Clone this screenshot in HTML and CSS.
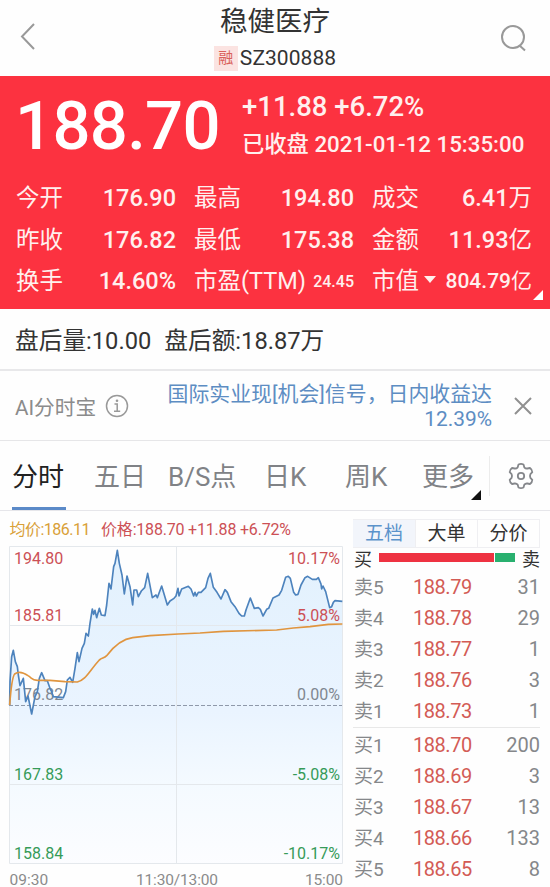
FILE: index.html
```
<!DOCTYPE html>
<html lang="zh-CN">
<head>
<meta charset="utf-8">
<title>稳健医疗 SZ300888</title>
<link rel="stylesheet" href="styles.css">
</head>
<body>
<header class="top">
  <svg class="back" width="16" height="28" viewBox="0 0 16 28"><path d="M14 2 2 14.500 14 27"/></svg>
  <div class="title">
    <h1>稳健医疗</h1>
    <div class="code"><span class="badge">融</span><span>SZ300888</span></div>
  </div>
  <svg class="search" width="28" height="30" viewBox="0 0 28 30"><circle cx="14" cy="14" r="11"/><path d="M20.500 22.500 26 27.500"/></svg>
</header>

<section class="quote">
  <div class="summary">
    <div class="price">188.70</div>
    <div class="meta">
      <div class="change">+11.88 +6.72%</div>
      <div class="time">已收盘 2021-01-12 15:35:00</div>
    </div>
  </div>
  <div class="stats">
    <div class="stat"><span>今开</span><b>176.90</b></div>
    <div class="stat"><span>最高</span><b>194.80</b></div>
    <div class="stat"><span>成交</span><b>6.41<i>万</i></b></div>
    <div class="stat"><span>昨收</span><b>176.82</b></div>
    <div class="stat"><span>最低</span><b>175.38</b></div>
    <div class="stat"><span>金额</span><b>11.93<i>亿</i></b></div>
    <div class="stat"><span>换手</span><b>14.60%</b></div>
    <div class="stat"><span>市盈(TTM)</span><b class="small">24.45</b></div>
    <div class="stat"><span>市值<i class="caret"></i></span><b class="cap">804.79<i>亿</i></b></div>
  </div>
  <i class="corner"></i>
</section>

<section class="after"><span>盘后量:10.00</span><span>盘后额:18.87万</span></section>

<section class="ai">
  <span class="ai-name">AI分时宝</span>
  <svg class="info" width="24" height="24" viewBox="0 0 24 24"><circle cx="12" cy="12" r="10.5"/><path d="M9.5 10h2.7v7M9 17.2h6.2"/><circle class="dot" cx="12" cy="6.7" r="1.3"/></svg>
  <p>国际实业现[机会]信号，日内收益达<br>12.39%</p>
  <svg class="close" width="20" height="20" viewBox="0 0 20 20"><path d="M2 2 18 18M18 2 2 18"/></svg>
</section>

<nav class="tabs">
  <span class="tab active">分时</span>
  <span class="tab">五日</span>
  <span class="tab bs">B/S点</span>
  <span class="tab dk">日K</span>
  <span class="tab wk">周K</span>
  <span class="tab more">更多</span>
  <span class="gear"><svg width="28" height="28" viewBox="0 0 28 28"><path d="M11.500 2.500Q14 1.300 16.500 2.500L17.300 5.300Q18.500 6.700 20.300 6.500L23 6Q25.200 7.500 25.300 10.200L23.400 12.200Q22.600 14 23.400 15.800L25.300 17.800Q25.200 20.500 23 22L20.300 21.500Q18.500 21.300 17.300 22.700L16.500 25.500Q14 26.700 11.500 25.500L10.700 22.700Q9.500 21.300 7.700 21.500L5 22Q2.800 20.500 2.700 17.800L4.600 15.800Q5.400 14 4.600 12.200L2.700 10.200Q2.800 7.500 5 6L7.700 6.500Q9.500 6.700 10.700 5.300Z"/><circle cx="14" cy="14" r="3.200"/></svg></span>
</nav>

<main class="board">
  <svg class="chart" width="345" height="376" viewBox="0 0 345 376">
    <defs>
      <linearGradient id="fill" gradientUnits="userSpaceOnUse" x1="0" y1="100" x2="0" y2="1080">
        <stop offset="0" stop-color="#e2f1fd"/><stop offset=".5" stop-color="#eaf4ff"/><stop offset=".72" stop-color="#f4faff"/><stop offset="1" stop-color="#fdfdff"/>
      </linearGradient>
    </defs>
    <g transform="translate(0 4) scale(.33333)">
      <path class="area" d="M29 1045V570L30 500 35 425 40 406 46 440 52 455 55 480 60 512 70 490 77 560 84 543 95 597 105 545 112 530 118 490 125 473 135 497 142 497 150 520 155 530 160 545 190 548 197 530 202 495 210 487 218 502 225 460 232 413 237 440 246 400 253 385 258 355 265 363 270 325 277 282 281 298 285 286 290 308 298 280 304 300 315 302 320 270 327 205 333 222 341 155 345 145 352 106 358 145 366 180 373 237 381 183 390 215 398 270 402 225 410 225 415 245 424 228 434 218 443 175 457 248 468 240 472 248 485 213 502 270 510 258 522 250 528 243 534 220 537 243 545 222 565 214 573 222 581 243 585 232 589 243 595 232 603 232 617 218 624 190 631 175 640 217 651 232 663 252 675 224 682 232 693 260 705 275 717 295 725 303 733 303 738 285 751 249 763 280 775 278 781 283 789 303 800 283 806 280 819 249 837 240 845 226 857 187 865 184 871 190 881 232 887 240 894 238 903 210 915 188 923 184 937 193 949 193 955 188 963 207 965 222 969 213 977 230 989 278 995 275 1000 262 1005 257 1027 259V1045Z"/>
    </g>
    <path class="grid" d="M9.500 35.500H342.500M9.500 114.500H342.500M9.500 273.500H342.500M9.500 352.500H342.500M9.500 35.500V352.500M176.500 35.500V352.500M342.500 35.500V352.500"/>
    <path class="zero" d="M9 194.500H342"/>
    <g class="red"><text x="14" y="53">194.80</text><text x="14" y="110">185.81</text></g>
    <text class="mid" x="14" y="189">176.82</text>
    <g transform="translate(0 4) scale(.33333)">
      <path class="line" d="M29 570 30 500 35 425 40 406 46 440 52 455 55 480 60 512 70 490 77 560 84 543 95 597 105 545 112 530 118 490 125 473 135 497 142 497 150 520 155 530 160 545 190 548 197 530 202 495 210 487 218 502 225 460 232 413 237 440 246 400 253 385 258 355 265 363 270 325 277 282 281 298 285 286 290 308 298 280 304 300 315 302 320 270 327 205 333 222 341 155 345 145 352 106 358 145 366 180 373 237 381 183 390 215 398 270 402 225 410 225 415 245 424 228 434 218 443 175 457 248 468 240 472 248 485 213 502 270 510 258 522 250 528 243 534 220 537 243 545 222 565 214 573 222 581 243 585 232 589 243 595 232 603 232 617 218 624 190 631 175 640 217 651 232 663 252 675 224 682 232 693 260 705 275 717 295 725 303 733 303 738 285 751 249 763 280 775 278 781 283 789 303 800 283 806 280 819 249 837 240 845 226 857 187 865 184 871 190 881 232 887 240 894 238 903 210 915 188 923 184 937 193 949 193 955 188 963 207 965 222 969 213 977 230 989 278 995 275 1000 262 1005 257 1027 259"/>
      <path class="avg" d="M29 570C32 530 36 485 44 477 56 468 70 472 84 482 98 491 96 495 112 496L150 496 195 500 232 501C258 494 266 470 298 435 306 428 312 430 320 422 340 396 365 372 398 368L450 362 535 357 600 354 670 349 830 345 880 339 930 335 985 328 1027 327"/>
    </g>
    <g class="red end"><text x="340" y="53">10.17%</text><text x="340" y="110">5.08%</text></g>
    <text class="mid end" x="340" y="189">0.00%</text>
    <g class="green"><text x="14" y="269">167.83</text><text x="14" y="348">158.84</text><g class="end"><text x="340" y="269">-5.08%</text><text x="340" y="348">-10.17%</text></g></g>
    <g class="hours"><text x="9.500" y="374">09:30</text><text x="136" y="374" textLength="82">11:30/13:00</text><text x="305" y="374" textLength="38">15:00</text></g>
    <g class="legend"><text class="gold" x="9.500" y="24" textLength="81">均价:186.11</text><text x="101" y="24" textLength="190">价格:188.70 +11.88 +6.72%</text></g>
  </svg>

  <aside class="depth">
    <div class="depth-tabs"><span class="on">五档</span><span>大单</span><span>分价</span></div>
    <div class="ratio"><span>买</span><i class="buy"></i><i class="sell"></i><span>卖</span></div>
    <div class="rows">
      <div class="row"><span>卖5</span><b>188.79</b><em>31</em></div>
      <div class="row"><span>卖4</span><b>188.78</b><em>29</em></div>
      <div class="row"><span>卖3</span><b>188.77</b><em>1</em></div>
      <div class="row"><span>卖2</span><b>188.76</b><em>3</em></div>
      <div class="row"><span>卖1</span><b>188.73</b><em>1</em></div>
    </div>
    <div class="rows bids">
      <div class="row"><span>买1</span><b>188.70</b><em>200</em></div>
      <div class="row"><span>买2</span><b>188.69</b><em>3</em></div>
      <div class="row"><span>买3</span><b>188.67</b><em>13</em></div>
      <div class="row"><span>买4</span><b>188.66</b><em>133</em></div>
      <div class="row"><span>买5</span><b>188.65</b><em>8</em></div>
    </div>
  </aside>
</main>
</body>
</html>
```
FILE: styles.css
```
* { box-sizing: border-box; }
body {
  margin: 0;
  width: 550px;
  height: 887px;
  overflow: hidden;
  background: #fefefe;
  color: #333;
  font-family: Roboto, "Noto Sans CJK SC", sans-serif;
}
svg { fill: none; flex: none; }
b, em, i, h1 { font-weight: inherit; font-style: normal; }

.top {
  height: 76px;
  display: flex;
  justify-content: space-between;
  padding: 0 23px 0 20px;
}
.back { margin-top: 22px; stroke: #999; stroke-width: 2; }
.search { margin-top: 23px; stroke: #999; stroke-width: 2; }
.title {
  display: flex;
  flex-direction: column;
  align-items: center;
  margin-left: 15px;
}
.title h1 { margin: 5px 0 0; font-size: 27.500px; line-height: 34px; }
.code {
  display: flex;
  align-items: center;
  gap: 2px;
  height: 26px;
  margin-top: 6px;
  font-size: 21px;
  letter-spacing: .05px;
}
.badge {
  width: 24px;
  height: 25px;
  background: #fbe3e1;
  color: #d9605a;
  font-size: 15px;
  line-height: 25px;
  text-align: center;
}

.quote {
  position: relative;
  height: 233px;
  background: #fc3240;
  color: #fff0ee;
}
.summary { display: flex; height: 102px; padding-left: 15px; }
.price {
  width: 227px;
  padding-top: 10px;
  color: #fff;
  font-size: 67px;
  font-weight: 500;
  line-height: 80px;
  letter-spacing: -.7px;
}
.meta { padding-top: 15px; font-weight: 500; white-space: nowrap; }
.change { font-size: 27.500px; line-height: 32px; }
.time { margin-top: 7px; font-size: 22.300px; line-height: 28px; }
.stats {
  display: grid;
  grid-template-columns: repeat(3, 160px);
  grid-auto-rows: 41.500px;
  column-gap: 18px;
  padding-left: 16px;
}
.stat {
  display: flex;
  align-items: center;
  justify-content: space-between;
  font-size: 23.500px;
  line-height: 41px;
  white-space: nowrap;
}
.stat b { font-weight: 500; }
.stat b i { font-weight: 400; }
.stat .small { font-size: 16px; }
.stat .cap { font-size: 21px; }
.caret {
  display: inline-block;
  margin-left: 5px;
  vertical-align: 6px;
  border: 6px solid transparent;
  border-top: 7px solid #fff0ee;
  border-bottom: 0;
}
.corner {
  position: absolute;
  right: 7px;
  bottom: 9px;
  border-left: 10px solid transparent;
  border-bottom: 10px solid #fff;
}

.after {
  display: flex;
  gap: 13px;
  height: 62px;
  padding-left: 15px;
  border-bottom: 2px solid #e8e8ea;
  font-size: 23.700px;
  line-height: 65px;
}
.ai {
  display: flex;
  align-items: center;
  height: 70px;
  padding: 0 17px 0 15px;
  border-bottom: 1px solid #e6e6e8;
  color: #8b8b8b;
}
.ai-name { font-size: 20.700px; }
.info { margin-left: 9px; stroke: #999; stroke-width: 1.500; }
.info .dot { fill: #999; stroke: none; }
.ai p {
  margin: 3px 21px 0 auto;
  color: #5d8dc3;
  font-size: 20.900px;
  line-height: 25px;
  text-align: right;
  white-space: nowrap;
}
.close { stroke: #909090; stroke-width: 2; }

.tabs {
  display: flex;
  height: 70px;
  padding-left: 12px;
  border-bottom: 1px solid #e6e6ea;
  color: #808286;
  font-size: 26px;
  line-height: 73px;
  white-space: nowrap;
}
.tab { position: relative; width: 82px; }
.active { width: 54px; margin-right: 28px; color: #222; }
.active::after {
  content: "";
  position: absolute;
  left: 0;
  bottom: 0;
  width: 54px;
  height: 3px;
  background: #5b8ac8;
}
.bs { width: 88px; margin-left: -8px; }
.dk { width: 81px; margin-left: 8px; }
.wk { width: 77px; }
.more { width: 60px; }
.more::after {
  content: "";
  position: absolute;
  right: 1px;
  bottom: 10px;
  border-left: 10px solid transparent;
  border-bottom: 10px solid #111;
}
.gear {
  display: flex;
  align-items: center;
  height: 40px;
  margin: 15px 0 0 7px;
  padding-left: 17px;
  border-left: 1px solid #ececec;
}
.gear svg { stroke: #85878b; stroke-width: 1.800; stroke-linejoin: round; }

.board { display: flex; }
.chart { font-size: 16px; }
.area { fill: url(#fill); }
.grid { stroke: #e4e8ec; }
.zero { stroke: #8f99aa; stroke-dasharray: 4 2; }
.line { stroke: #4d83bd; stroke-width: 5; stroke-linejoin: round; }
.avg { stroke: #e0953f; stroke-width: 5; }
.red, .legend { fill: #cc5055; }
.gold { fill: #d9a037; }
.green { fill: #369b59; }
.mid { fill: #7f8790; }
.hours { fill: #8b8b8b; font-size: 15.500px; }
.end { text-anchor: end; }

.depth { width: 197px; margin-left: 8px; font-size: 20px; }
.depth-tabs {
  display: grid;
  grid-template-columns: 63px 62px 62px;
  height: 34px;
  padding-top: 8px;
  color: #333;
  font-size: 19px;
  line-height: 27px;
  text-align: center;
}
.depth-tabs span { border: 1px solid #efeff2; border-left: 0; }
.depth-tabs .on { background: #f2f5fb; color: #5b93cb; }
.ratio {
  display: flex;
  align-items: center;
  width: 188px;
  height: 26px;
  padding-left: 1px;
  font-size: 18px;
}
.buy, .sell { height: 9px; margin-bottom: 1px; background: #ee3241; }
.buy { width: 115px; margin-right: 1px; margin-left: 7px; }
.sell { width: 20px; margin-right: 7px; background: #29b06f; }
.rows { width: 187px; padding: 1px 0 0 1px; }
.bids { padding-top: 2px; border-top: 1px solid #e8e8e8; }
.row {
  display: grid;
  grid-template-columns: 59px 59px 1fr;
  height: 31px;
  color: #85878a;
  line-height: 31px;
}
.row span { font-size: 19px; }
.row b { color: #d35b55; letter-spacing: -.45px; }
.row em { text-align: right; }
```
